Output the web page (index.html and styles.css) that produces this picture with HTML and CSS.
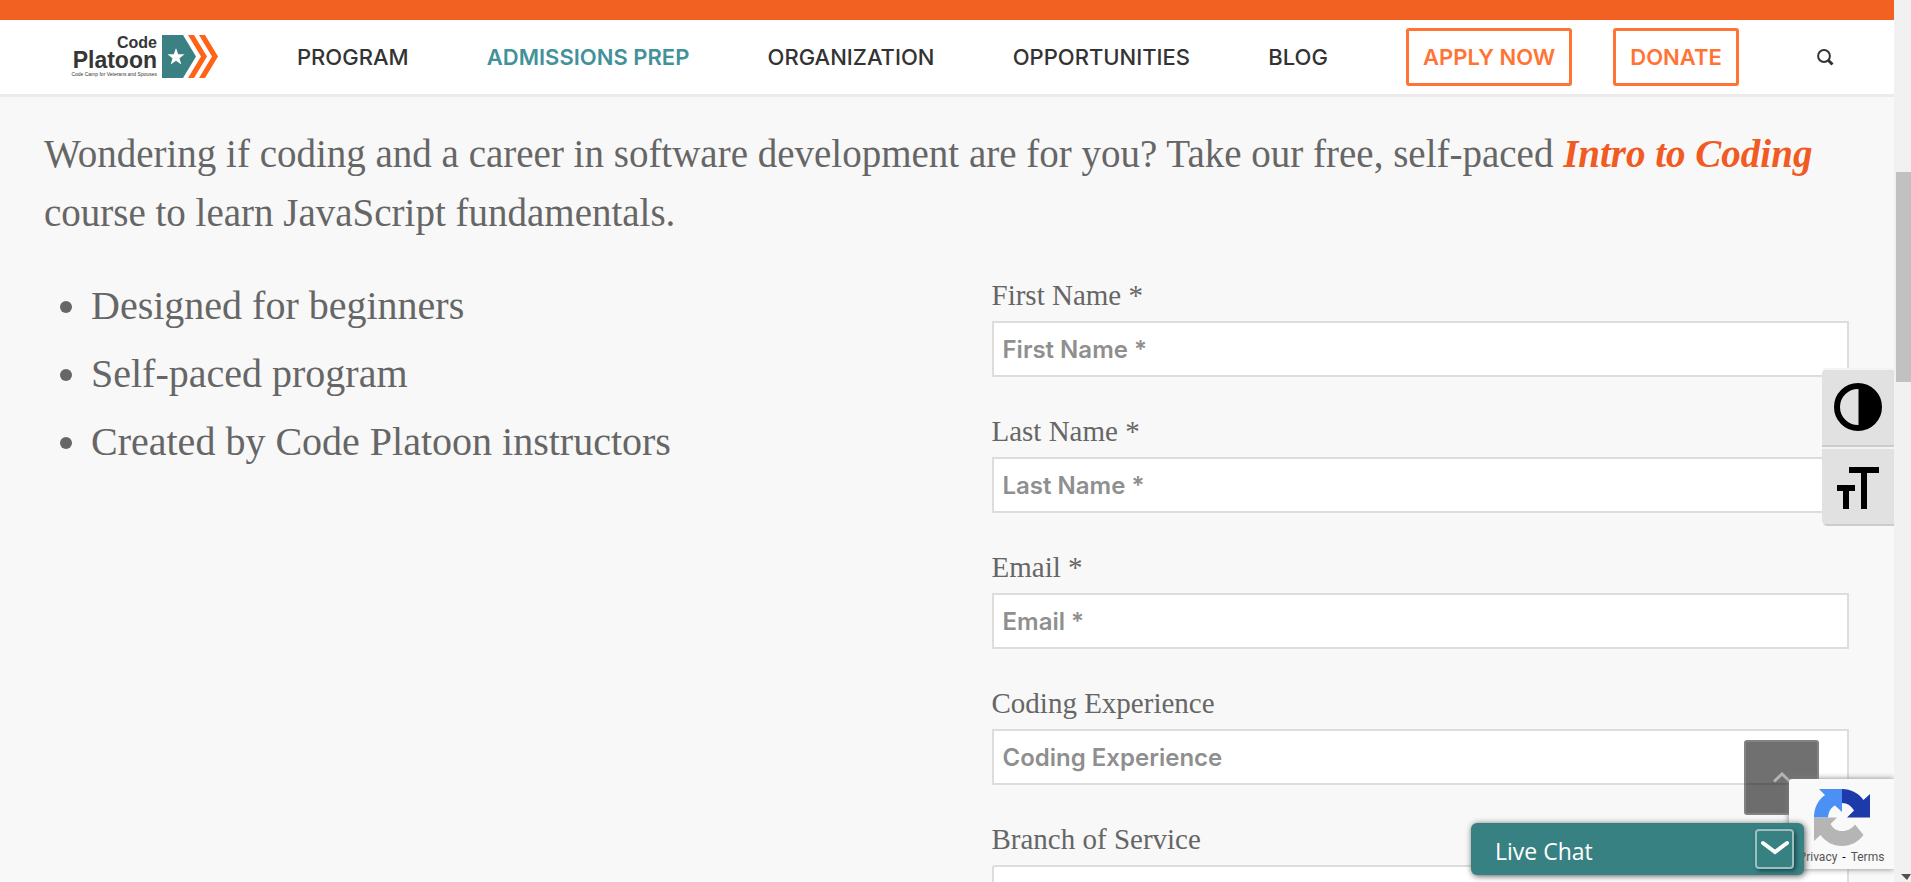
FILE: index.html
```html
<!DOCTYPE html>
<html lang="en">
<head>
<meta charset="utf-8">
<title>Code Platoon – Intro to Coding</title>
<link rel="stylesheet" href="styles.css">
</head>
<body>
<div class="window">
  <div class="page">
    <div class="top-bar"></div>
    <header class="header">
      <a class="logo" href="#" aria-label="Code Platoon home">
        <span class="logo-text">
          <span class="logo-code">Code</span>
          <span class="logo-platoon">Platoon</span>
          <span class="logo-tag">Code Camp for Veterans and Spouses</span>
        </span>
        <svg class="logo-mark" width="56" height="43" viewBox="0 0 56 43" aria-hidden="true">
          <path fill="#3b8183" d="M0 0H21L34 21.500L21 43H0Z"/>
          <path fill="#fff" d="M14 13L16.200 19.200H22.500L17.500 23.300L19.300 29.500L14 25.800L8.700 29.500L10.500 23.300L5.500 19.200H11.800Z"/>
          <path fill="#ff6315" d="M26 0H32L45 21.500L32 43H26L39 21.500ZM37 0H43L56 21.500L43 43H37L50 21.500Z"/>
        </svg>
      </a>
      <nav class="nav">
        <a class="nav-link" href="#">PROGRAM</a>
        <a class="nav-link active" href="#">ADMISSIONS PREP</a>
        <a class="nav-link" href="#">ORGANIZATION</a>
        <a class="nav-link" href="#">OPPORTUNITIES</a>
        <a class="nav-link" href="#">BLOG</a>
        <span class="nav-actions">
          <a class="nav-button" href="#">APPLY NOW</a>
          <a class="nav-button" href="#">DONATE</a>
        </span>
        <button class="search" type="button" aria-label="Search">
          <svg width="17" height="17" viewBox="0 0 17 17" fill="none" stroke="#333"><circle cx="7" cy="7" r="5.900" stroke-width="2"/><path d="M11 11l4.500 4.500" stroke-width="3"/></svg>
        </button>
      </nav>
    </header>
    <main class="main">
      <p class="intro">Wondering if coding and a career in software development are for you? Take our free, self-paced <a href="#">Intro to Coding</a> course to learn JavaScript fundamentals.</p>
      <div class="columns">
        <ul class="features">
          <li>Designed for beginners</li>
          <li>Self-paced program</li>
          <li>Created by Code Platoon instructors</li>
        </ul>
        <form class="form">
          <div class="field"><label for="first">First Name *</label><input id="first" type="text" placeholder="First Name *"></div>
          <div class="field"><label for="last">Last Name *</label><input id="last" type="text" placeholder="Last Name *"></div>
          <div class="field"><label for="email">Email *</label><input id="email" type="email" placeholder="Email *"></div>
          <div class="field"><label for="exp">Coding Experience</label><input id="exp" type="text" placeholder="Coding Experience"></div>
          <div class="field"><label for="branch">Branch of Service</label><select id="branch"><option></option></select></div>
        </form>
      </div>
    </main>

    <div class="access">
      <button type="button" aria-label="Toggle high contrast">
        <svg width="48" height="48" viewBox="0 0 48 48"><circle cx="24" cy="24" r="21" fill="none" stroke="#000" stroke-width="6"/><path d="M24.500 4a20 20 0 0 1 0 40z"/></svg>
      </button>
      <button type="button" aria-label="Toggle font size">
        <svg width="48" height="48" viewBox="0 0 48 48"><path d="M15 5h30v6H33v36h-6V11H15zM3 23h18v6h-6v18H9V29H3z"/></svg>
      </button>
    </div>
    <a class="to-top" href="#" aria-label="Back to top">
      <svg width="18" height="11" viewBox="0 0 18 11" fill="none" stroke="#b4b4b4" stroke-width="3"><path d="M1 9.500L9 2l8 7.500"/></svg>
    </a>
    <div class="recaptcha">
      <svg width="56" height="57" viewBox="0 0 56 57" aria-hidden="true">
        <path fill="#1c3aa9" d="M28 0C37 0 44.500 4 49.500 11L56 5V28.500H33L40 21.500C37.500 17 33.500 14 28 14Z"/>
        <path fill="#4a90f5" d="M28 0V23L21 16.500C17 18.500 14.500 22.500 14 28.500H0C0 19 4 11 11 6L5 0Z"/>
        <path fill="#b5b5b5" d="M0 28.500H23L16.500 35C19 39.500 22.500 42 28 42C34 42 38 39.500 41 35.500L49.500 46C44 53 37 57 28 57C19 57 12 53 6.500 46L0 52Z"/>
      </svg>
      <div class="recaptcha-links"><a href="#">Privacy</a><span>-</span><a href="#">Terms</a></div>
    </div>
    <div class="chat">
      <span>Live Chat</span>
      <button type="button" aria-label="Minimize chat">
        <svg width="30" height="16" viewBox="0 0 30 16" fill="none" stroke="#fff" stroke-width="4" stroke-linecap="round"><path d="M3 3l12 9 12-9"/></svg>
      </button>
    </div>
  </div>
  <div class="scrollbar"><div class="thumb"></div><div class="arrow"></div></div>
</div>
</body>
</html>
```

FILE: styles.css
```css
* { box-sizing: border-box; }
body {
  margin: 0;
  background: #f8f8f8;
  color: #666;
  font-family: "Liberation Serif", serif;
}
.window {
  display: grid;
  grid-template-columns: minmax(0, 1fr) 17px;
  height: 100vh;
  overflow: hidden;
}
.page {
  position: relative;
  height: 100vh;
  overflow: hidden;
}
.top-bar { height: 20px; background: #f26122; }
.header {
  display: flex;
  align-items: center;
  height: 77px;
  padding: 0 60px 0 73px;
  background: #fff;
  border-bottom: 3px solid #ebebeb;
}
.logo {
  display: flex;
  align-items: center;
  gap: 5px;
  margin-top: -2px;
  color: #363636;
  text-decoration: none;
  font-family: "Liberation Sans", sans-serif;
}
.logo-text {
  display: flex;
  flex-direction: column;
  align-items: flex-end;
  width: 84px;
  font-weight: bold;
  white-space: nowrap;
}
.logo-code { font-size: 16px; line-height: 15px; }
.logo-platoon { font-size: 23px; line-height: 20px; }
.logo-tag { font-size: 5px; line-height: 8px; font-weight: normal; }
.nav {
  display: flex;
  flex: 1;
  align-items: center;
  justify-content: space-between;
  margin-left: 79px;
  font: 500 22px Inter, sans-serif;
}
.nav-link { color: #333; text-decoration: none; }
.active { color: #43919a; font-weight: 600; }
.nav-actions { display: flex; gap: 41px; }
.nav-button {
  padding: 0 14px;
  border: 3px solid #ff7435;
  border-radius: 3px;
  color: #ff7435;
  font-weight: 600;
  line-height: 52px;
  text-decoration: none;
}
.search {
  display: flex;
  padding: 0;
  border: 0;
  background: none;
}
.main { padding: 27px 45px 0 44px; }
.intro { margin: 0; font-size: 39px; line-height: 59px; }
.intro a { color: #f15a22; font-style: italic; font-weight: bold; text-decoration: none; }
.columns {
  display: grid;
  grid-template-columns: minmax(0, 1fr) minmax(0, 1fr);
  gap: 90px;
  padding-top: 30px;
}
.features { margin: 0; padding: 0 0 0 47px; list-style: none; font-size: 40px; line-height: 68px; }
.features li { display: flex; align-items: center; }
.features li::before {
  content: "";
  width: 12px;
  height: 12px;
  margin: 2px 19px 0 -31px;
  border-radius: 50%;
  background: #666;
}
.form { display: grid; gap: 38px; padding-top: 7px; }
.field { display: grid; gap: 10px; }
.field label { font-size: 29px; line-height: 32px; }
.field input, .field select {
  width: 100%;
  height: 56px;
  padding: 0 9px;
  border: 2px solid #ddd;
  border-radius: 0;
  background: #fff;
  font: 600 24px Inter, sans-serif;
  appearance: none;
}
.field select { border-radius: 3px; }
.field input::placeholder { color: #8f8f8f; opacity: 1; }
.access {
  position: absolute;
  top: 368px;
  right: 0;
  width: 72px;
  border-radius: 6px 0 0 6px;
  overflow: hidden;
}
.access button {
  display: flex;
  align-items: center;
  justify-content: center;
  width: 100%;
  height: 79px;
  padding: 0 0 2px;
  border: 0;
  border-top: 2px solid #f3f3f3;
  border-bottom: 2px solid #ccc;
  background: #e1e1e1;
}
.to-top {
  position: absolute;
  right: 75px;
  bottom: 67px;
  display: flex;
  align-items: center;
  justify-content: center;
  width: 75px;
  height: 75px;
  border: 2px solid rgba(150, 150, 150, .5);
  border-radius: 3px;
  background: rgba(0, 0, 0, .56);
}
.recaptcha {
  position: absolute;
  right: 0;
  bottom: 13px;
  display: flex;
  flex-direction: column;
  align-items: center;
  gap: 3px;
  width: 105px;
  height: 90px;
  padding-top: 10px;
  border-radius: 3px 0 0 3px;
  background: #f9f9f9;
  box-shadow: 0 0 6px #808080;
}
.recaptcha-links { display: flex; gap: 5px; font: 12px/16px Roboto, sans-serif; color: #000; }
.recaptcha-links a { color: #555; text-decoration: none; }
.chat {
  position: absolute;
  right: 90px;
  bottom: 7px;
  display: flex;
  align-items: center;
  justify-content: space-between;
  width: 333px;
  height: 52px;
  padding: 0 10px 0 24px;
  border-radius: 6px;
  background: #388183;
  box-shadow: 1px 1px 6px #555;
  color: #fff;
  font: 23px "Open Sans", sans-serif;
}
.chat span { padding-top: 4px; }
.chat button {
  display: flex;
  align-items: center;
  justify-content: center;
  width: 39px;
  height: 40px;
  padding: 0 0 2px;
  border: 2px solid #9cc0c1;
  border-radius: 4px;
  background: #388183;
  box-shadow: 2px 2px 4px #184a4c;
}
.scrollbar {
  display: flex;
  flex-direction: column;
  justify-content: space-between;
  align-items: flex-end;
  padding: 172px 0 2px 2px;
  background: #f1f1f1;
}
.thumb { width: 15px; height: 210px; background: #c1c1c1; }
.arrow { width: 10px; height: 6px; background: #505050; clip-path: polygon(0 0, 100% 0, 60% 100%); }
```
